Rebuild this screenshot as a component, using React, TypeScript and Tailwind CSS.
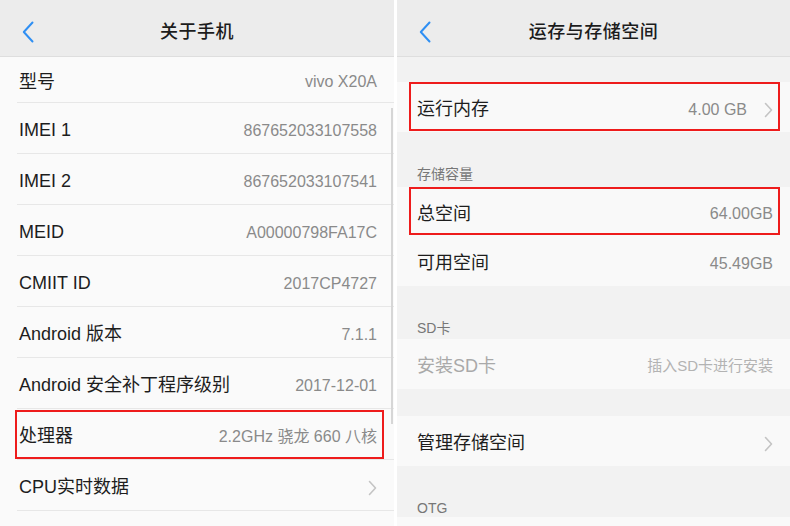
import React from "react";

const FONT = { fontFamily: '"Liberation Sans", "Noto Sans CJK SC", sans-serif' };

function BackIcon() {
  return (
    <svg width="12" height="22" viewBox="0 0 12 22" fill="none">
      <polyline points="10.5,1.5 1.8,11 10.5,20.5" stroke="#2f8ff3" strokeWidth="2" strokeLinecap="round" strokeLinejoin="round" />
    </svg>
  );
}

function Chevron() {
  return (
    <svg width="9" height="16" viewBox="0 0 9 16" fill="none">
      <polyline points="1.5,1.5 7.5,8 1.5,14.5" stroke="#c4c4c4" strokeWidth="1.6" strokeLinecap="round" strokeLinejoin="round" />
    </svg>
  );
}

function Header({ title }: { title: string }) {
  return (
    <div className="h-[57px] pt-[8px] bg-[#ececec] border-b border-[#dedede] grid grid-cols-[1fr_auto_1fr] items-center shrink-0">
      <div className="pl-[22px] flex items-center">
        <BackIcon />
      </div>
      <div className="text-[18px] text-[#1c1c1c] font-medium tracking-[0.5px]">{title}</div>
      <div />
    </div>
  );
}

function LeftRow({
  label,
  value,
  h = "h-[51px]",
  chevron,
  boxed,
}: {
  label: string;
  value?: string;
  h?: string;
  chevron?: boolean;
  boxed?: boolean;
}) {
  return (
    <div className={`relative ml-[17px] ${h} flex items-center justify-between border-b border-[#e7e7e7] pl-[2px] pr-[17px] pt-[5px]`}>
      <span className="text-[18px] text-[#1d1d1d]">{label}</span>
      {value && <span className="text-[16px] text-[#8a8a8a]">{value}</span>}
      {chevron && <Chevron />}
      {boxed && (
        <div className="absolute left-[-2px] right-[10px] top-[1px] bottom-[0px] border-2 border-[#ee1c1c]" />
      )}
    </div>
  );
}

function LeftPanel() {
  return (
    <div className="w-[394px] h-full bg-[#fafafa] flex flex-col relative shrink-0">
      <Header title="关于手机" />
      <div className="flex flex-col">
        <LeftRow label="型号" value="vivo X20A" h="h-[46px]" />
        <LeftRow label="IMEI 1" value="867652033107558" />
        <LeftRow label="IMEI 2" value="867652033107541" />
        <LeftRow label="MEID" value="A00000798FA17C" />
        <LeftRow label="CMIIT ID" value="2017CP4727" />
        <LeftRow label="Android 版本" value="7.1.1" />
        <LeftRow label="Android 安全补丁程序级别" value="2017-12-01" />
        <LeftRow label="处理器" value="2.2GHz 骁龙 660 八核" boxed />
        <LeftRow label="CPU实时数据" chevron />
      </div>
      <div className="absolute left-[391px] top-[108px] w-[2px] h-[316px] bg-[#d6d6d6]" />
    </div>
  );
}

function RightRow({
  label,
  value,
  chevron,
  boxed,
  disabled,
  h = "h-[50px]",
}: {
  label: string;
  value?: string;
  chevron?: boolean;
  boxed?: boolean;
  disabled?: boolean;
  h?: string;
}) {
  return (
    <div className={`relative ${h} bg-[#f9f9f9] flex items-center justify-between pl-[20px] pr-[17px] pt-[5px] shrink-0`}>
      <span className={`text-[18px] ${disabled ? "text-[#a9a9a9]" : "text-[#1d1d1d]"}`}>{label}</span>
      <div className="flex items-center gap-[17px]">
        {value && (
          <span className={`${disabled ? "text-[15px] text-[#b3b3b3]" : "text-[16px] text-[#8a8a8a]"}`}>{value}</span>
        )}
        {chevron && <Chevron />}
      </div>
      {boxed && (
        <div className="absolute left-[12px] right-[10px] top-[0px] bottom-[1px] border-2 border-[#ee1c1c]" />
      )}
    </div>
  );
}

function Section({ title, h, pb }: { title: string; h: string; pb: string }) {
  return (
    <div className={`${h} ${pb} flex items-end pl-[20px] shrink-0`}>
      <span className="text-[14px] leading-[14px] text-[#777777]">{title}</span>
    </div>
  );
}

function RightPanel() {
  return (
    <div className="flex-1 h-full bg-[#f2f2f2] flex flex-col">
      <Header title="运存与存储空间" />
      <div className="h-[25px] shrink-0" />
      <RightRow label="运行内存" value="4.00 GB" chevron boxed />
      <Section title="存储容量" h="h-[55px]" pb="pb-[6px]" />
      <RightRow label="总空间" value="64.00GB" boxed h="h-[49px]" />
      <RightRow label="可用空间" value="45.49GB" />
      <Section title="SD卡" h="h-[53px]" pb="pb-[4px]" />
      <RightRow label="安装SD卡" value="插入SD卡进行安装" disabled />
      <div className="h-[27px] shrink-0" />
      <RightRow label="管理存储空间" chevron />
      <Section title="OTG" h="h-[51px]" pb="pb-[2px]" />
      <div className="h-[40px] bg-[#f9f9f9] shrink-0" />
    </div>
  );
}

export default function App() {
  return (
    <div className="w-[790px] h-[526px] flex bg-white overflow-hidden" style={FONT}>
      <LeftPanel />
      <div className="w-[3px] bg-white shrink-0" />
      <RightPanel />
    </div>
  );
}
